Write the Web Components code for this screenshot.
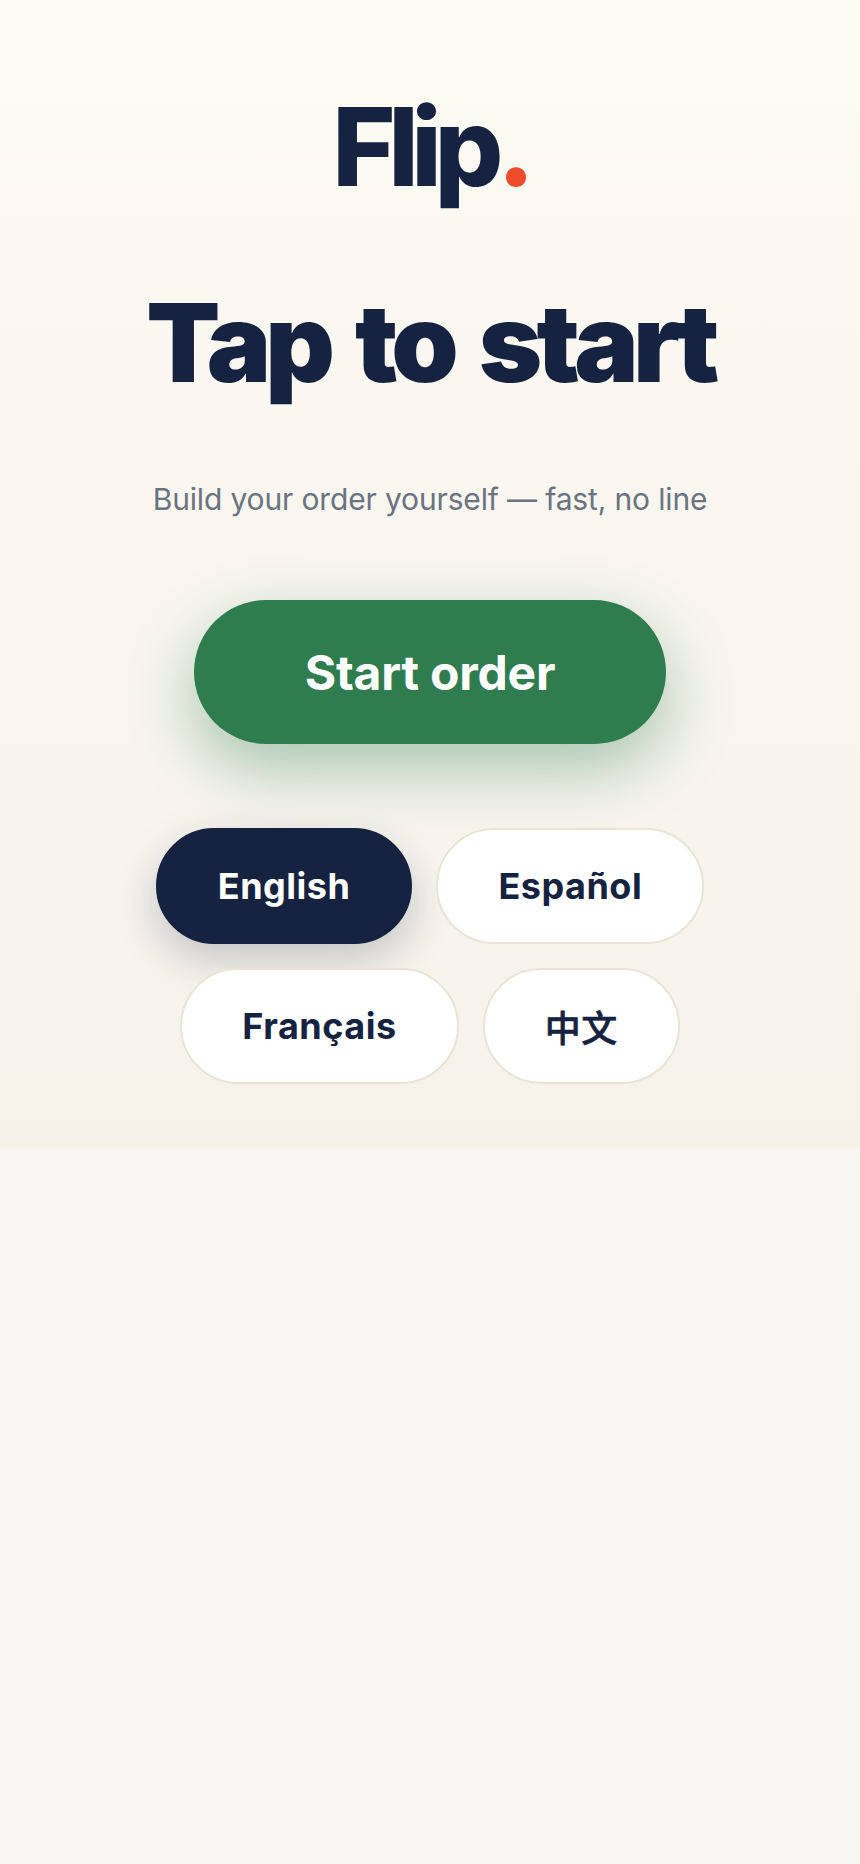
<!DOCTYPE html>
<html lang="en">
<head>
<meta charset="utf-8">
<title>Flip</title>
<style>
  html, body { margin: 0; padding: 0; }
  body { background: #f8f6f0; min-height: 1864px; font-family: Inter, "Noto Sans CJK SC", sans-serif; }
</style>
</head>
<body>
<flip-welcome>
  <flip-logo></flip-logo>
  <h1 slot="title">Tap to start</h1>
  <span slot="subtitle">Build your order yourself — fast, no line</span>
  <start-button slot="action">Start order</start-button>
  <lang-pill slot="langs" active>English</lang-pill>
  <lang-pill slot="langs">Español</lang-pill>
  <lang-pill slot="langs">Français</lang-pill>
  <lang-pill slot="langs" lang="zh">中文</lang-pill>
</flip-welcome>
<script>
class FlipLogo extends HTMLElement {
  connectedCallback() {
    this.attachShadow({ mode: 'open' });
    this.shadowRoot.innerHTML = `
      <style>
        :host {
          display: block;
          font-size: 108px;
          font-weight: 800;
          line-height: 1;
          letter-spacing: -7.4px;
          color: #152341;
          text-align: center;
        }
        span { color: #ee4b2b; margin-left: 1px; }
      </style>
      Flip<span>.</span>
    `;
  }
}

class StartButton extends HTMLElement {
  connectedCallback() {
    this.attachShadow({ mode: 'open' });
    this.shadowRoot.innerHTML = `
      <style>
        :host {
          display: flex;
          align-items: center;
          justify-content: center;
          box-sizing: border-box;
          width: 472px;
          height: 144px;
          padding-top: 2px;
          border-radius: 72px;
          background: #2f7d4f;
          color: #fff;
          font-size: 48px;
          font-weight: 700;
          letter-spacing: -0.2px;
          box-shadow: 0 24px 64px rgba(47, 125, 79, 0.4);
        }
      </style>
      <slot></slot>
    `;
  }
}

class LangPill extends HTMLElement {
  connectedCallback() {
    this.attachShadow({ mode: 'open' });
    this.shadowRoot.innerHTML = `
      <style>
        :host {
          display: flex;
          align-items: center;
          justify-content: center;
          box-sizing: border-box;
          height: 116px;
          padding: 0 60px;
          border: 2px solid #e8e4d6;
          border-radius: 58px;
          background: #fff;
          color: #152341;
          font-size: 36px;
          font-weight: 700;
          letter-spacing: 0.5px;
          font-family: Inter, "Noto Sans CJK SC", sans-serif;
        }
        :host([active]) {
          background: #152341;
          border-color: #152341;
          color: #fff;
          box-shadow: 0 16px 40px rgba(21, 35, 65, 0.22);
        }
        :host([lang]) { font-weight: 500; -webkit-text-stroke: 0.6px currentColor; }
      </style>
      <slot></slot>
    `;
  }
}

class FlipWelcome extends HTMLElement {
  connectedCallback() {
    this.attachShadow({ mode: 'open' });
    this.shadowRoot.innerHTML = `
      <style>
        :host {
          display: flex;
          flex-direction: column;
          align-items: center;
          box-sizing: border-box;
          height: 1148px;
          padding-top: 93px;
          background: linear-gradient(180deg, #fbfaf3 0%, #f5f2ea 100%);
        }
        ::slotted(h1) {
          margin: 83px 0 0;
          font-size: 108px;
          font-weight: 900;
          line-height: 1.1;
          letter-spacing: -5.8px;
          word-spacing: 10px;
          color: #152341;
        }
        .sub {
          margin-top: 77px;
          font-size: 30px;
          line-height: 39px;
          letter-spacing: -0.15px;
          color: #6b7280;
        }
        .action { margin-top: 81px; }
        .langs {
          display: flex;
          flex-wrap: wrap;
          justify-content: center;
          gap: 24px;
          width: 560px;
          margin-top: 84px;
        }
      </style>
      <slot></slot>
      <slot name="title"></slot>
      <div class="sub"><slot name="subtitle"></slot></div>
      <div class="action"><slot name="action"></slot></div>
      <div class="langs"><slot name="langs"></slot></div>
    `;
  }
}

customElements.define('flip-logo', FlipLogo);
customElements.define('start-button', StartButton);
customElements.define('lang-pill', LangPill);
customElements.define('flip-welcome', FlipWelcome);
</script>
</body>
</html>
